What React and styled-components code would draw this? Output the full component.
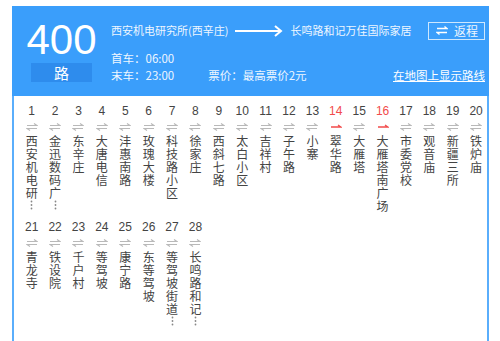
import styled, { createGlobalStyle } from 'styled-components';

const GlobalStyle = createGlobalStyle`
	body {
		margin: 0;
		background: #ffffff;
		font-family: 'Liberation Sans', 'Noto Sans CJK SC', sans-serif;
	}
`;

const stops = [
	{ name: '西安机电研', more: true },
	{ name: '金迅数码广', more: true },
	{ name: '东辛庄' },
	{ name: '大唐电信' },
	{ name: '沣惠南路' },
	{ name: '玫瑰大楼' },
	{ name: '科技路小区' },
	{ name: '徐家庄' },
	{ name: '西斜七路' },
	{ name: '太白小区' },
	{ name: '吉祥村' },
	{ name: '子午路' },
	{ name: '小寨' },
	{ name: '翠华路', oneWay: true },
	{ name: '大雁塔' },
	{ name: '大雁塔南广场', oneWay: true },
	{ name: '市委党校' },
	{ name: '观音庙' },
	{ name: '新疆三所' },
	{ name: '铁炉庙' },
	{ name: '青龙寺' },
	{ name: '铁设院' },
	{ name: '千户村' },
	{ name: '等驾坡' },
	{ name: '康宁路' },
	{ name: '东等驾坡' },
	{ name: '等驾坡街道', more: true },
	{ name: '长鸣路和记', more: true },
];

const BothWays = () => (
	<svg width='12' height='8' viewBox='0 0 12 8'>
		<path d='M1 2.5 H11 L8 0.5' fill='none' stroke='#b9b9b9' strokeWidth='1.2' />
		<path d='M11 5.5 H1 L4 7.5' fill='none' stroke='#b9b9b9' strokeWidth='1.2' />
	</svg>
);

const OneWay = () => (
	<svg width='12' height='8' viewBox='0 0 12 8'>
		<path d='M1 4 H11 L8 2' fill='none' stroke='#f24b4b' strokeWidth='1.3' />
	</svg>
);

// vertical dots drawn as a tiny column so the glyph height stays fixed
const MoreDots = () => (
	<svg width='3' height='10' viewBox='0 0 3 10'>
		<circle cx='1.5' cy='1.5' r='0.9' fill='#888888' />
		<circle cx='1.5' cy='5' r='0.9' fill='#888888' />
		<circle cx='1.5' cy='8.5' r='0.9' fill='#888888' />
	</svg>
);

const App = () => {
	return (
		<>
			<GlobalStyle />
			<Wrapper>
				<Header>
					<LineBlock>
						<LineNumber>400</LineNumber>
						<LineTag>路</LineTag>
					</LineBlock>
					<Info>
						<TopRow>
							<Route>
								<span>西安机电研究所(西辛庄)</span>
								<svg width='48' height='12' viewBox='0 0 48 12'>
									<path d='M0 6 H46' stroke='#ffffff' strokeWidth='2' />
									<path d='M40 1 L46 6 L40 11' fill='none' stroke='#ffffff' strokeWidth='2' />
								</svg>
								<span>长鸣路和记万佳国际家居</span>
							</Route>
							<ReturnButton>
								<svg width='12' height='9' viewBox='0 0 12 9'>
									<path d='M1 2.5 H11 L8.5 0.5' fill='none' stroke='#ffffff' strokeWidth='1.3' />
									<path d='M11 6.5 H1 L3.5 8.5' fill='none' stroke='#ffffff' strokeWidth='1.3' />
								</svg>
								返程
							</ReturnButton>
						</TopRow>
						<InfoLine>首车：06:00</InfoLine>
						<BottomRow>
							<InfoLine>末车：23:00</InfoLine>
							<Price>票价：最高票价2元</Price>
							<MapLink>在地图上显示路线</MapLink>
						</BottomRow>
					</Info>
				</Header>
				<Panel>
					<StopGrid>
						{stops.map((stop, i) => (
							<Stop key={i}>
								<StopNumber $red={stop.oneWay}>{i + 1}</StopNumber>
								<StopArrow>{stop.oneWay ? <OneWay /> : <BothWays />}</StopArrow>
								<StopName>
									{stop.name}
									{stop.more && (
										<More>
											<MoreDots />
										</More>
									)}
								</StopName>
							</Stop>
						))}
					</StopGrid>
				</Panel>
			</Wrapper>
		</>
	);
};

const Wrapper = styled.div`
	margin: 6px 11px 0 12px;
	width: 477px;
`;

const Header = styled.div`
	display: flex;
	height: 90px;
	background: #3a9efb;
	color: #ffffff;
`;

const LineBlock = styled.div`
	display: flex;
	flex-direction: column;
	align-items: center;
	width: 61px;
	margin-left: 19px;
	padding-top: 13px;
`;

const LineNumber = styled.div`
	font-size: 42px;
	line-height: 42px;
	height: 44px;
`;

const LineTag = styled.div`
	width: 61px;
	height: 19px;
	line-height: 19px;
	text-align: center;
	font-size: 15px;
	font-family: 'Noto Sans CJK SC', sans-serif;
	background: #2e8ced;
`;

const Info = styled.div`
	flex: 1;
	min-width: 0;
	display: flex;
	flex-direction: column;
	margin-left: 19px;
	padding: 16px 4px 0 0;
	font-size: 11.5px;
	font-family: 'Noto Sans CJK SC', sans-serif;
	color: #eef6ff;
	white-space: nowrap;
`;

const TopRow = styled.div`
	display: flex;
	align-items: center;
	justify-content: space-between;
	height: 17px;
	margin-bottom: 11px;
`;

const Route = styled.div`
	display: flex;
	align-items: center;
	gap: 7px;
	font-size: 11px;
	line-height: 17px;
`;

const ReturnButton = styled.div`
	display: flex;
	align-items: center;
	gap: 6px;
	height: 16px;
	padding: 0 6px 0 7px;
	border: 1px solid rgba(255, 255, 255, 0.75);
	font-size: 12px;
`;

const InfoLine = styled.div`
	line-height: 17px;
	height: 17px;
`;

const BottomRow = styled.div`
	display: flex;
	align-items: center;
`;

const Price = styled.div`
	margin-left: 34px;
	line-height: 17px;
`;

const MapLink = styled.a`
	margin-left: auto;
	line-height: 17px;
	color: #ffffff;
	text-decoration: underline;
	cursor: pointer;
`;

const Panel = styled.div`
	border-left: 2px solid #5aaefc;
	border-right: 2px solid #5aaefc;
	padding: 8px 0 30px 6px;
	background: #ffffff;
`;

const StopGrid = styled.div`
	display: grid;
	grid-template-columns: repeat(20, 23.4px);
	row-gap: 8px;
`;

const Stop = styled.div`
	display: flex;
	flex-direction: column;
	align-items: center;
`;

const StopNumber = styled.div`
	font-size: 12px;
	line-height: 14px;
	color: ${props => (props.$red ? '#f24b4b' : '#444444')};
`;

const StopArrow = styled.div`
	display: flex;
	height: 8px;
	margin-top: 5px;
`;

const StopName = styled.div`
	display: flex;
	flex-direction: column;
	align-items: center;
	width: 12px;
	margin-top: 3px;
	font-size: 12px;
	line-height: 13px;
	font-family: 'Noto Sans CJK SC', sans-serif;
	color: #444444;
	word-break: break-all;
	text-align: center;
`;

const More = styled.span`
	display: flex;
	justify-content: center;
	height: 12px;
	padding-top: 1px;
`;

export default App;
